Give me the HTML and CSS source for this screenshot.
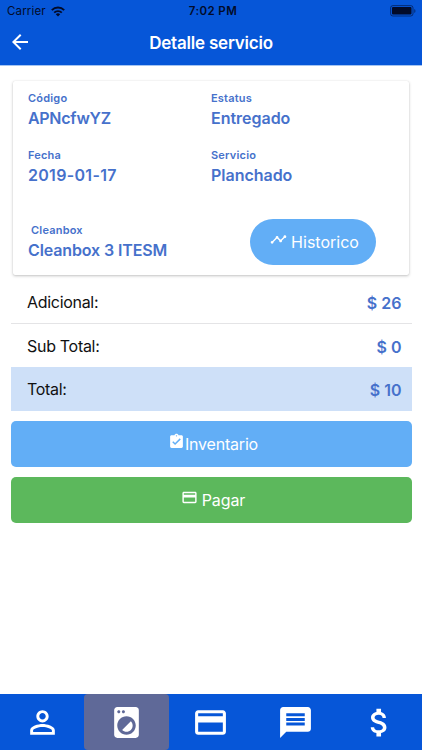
FILE: index.html
```html
<!DOCTYPE html>
<html lang="es">
<head>
<meta charset="utf-8">
<title>Detalle servicio</title>
<link rel="stylesheet" href="styles.css">
</head>
<body>
<div class="screen">
  <header class="header">
    <div class="status">
      <div class="carrier"><span>Carrier</span>
        <svg class="wifi" viewBox="0 0 14 11"><g fill="none" stroke="currentColor" stroke-width="1.9"><path d="M.8 4.1a8.8 8.8 0 0 1 12.4 0"/><path d="M3.2 6.7a5.4 5.4 0 0 1 7.6 0"/></g><path d="M4.8 8.3a3.1 3.1 0 0 1 4.4 0L7 10.6z" fill="currentColor"/></svg>
      </div>
      <div class="time">7:02 PM</div>
      <svg class="battery" viewBox="0 0 26 12"><rect x=".6" y=".6" width="22.4" height="10.4" rx="2.3" fill="none" stroke="currentColor" stroke-opacity=".55"/><rect x="2" y="2" width="19.5" height="7.6" rx="1" fill="currentColor"/><path d="M24.2 4v4q1.3-.6 1.3-2t-1.3-2z" fill="currentColor" fill-opacity=".5"/></svg>
    </div>
    <div class="titlebar">
      <svg class="back" viewBox="0 0 24 24"><path d="M20 11H7.83l5.59-5.59L12 4l-8 8 8 8 1.41-1.41L7.83 13H20v-2z"/></svg>
      <h1 class="title">Detalle servicio</h1>
    </div>
  </header>

  <main class="content">
    <section class="card">
      <div class="field"><span class="label">Código</span><span class="value code">APNcfwYZ</span></div>
      <div class="field"><span class="label">Estatus</span><span class="value">Entregado</span></div>
      <div class="field"><span class="label">Fecha</span><span class="value date">2019-01-17</span></div>
      <div class="field"><span class="label">Servicio</span><span class="value">Planchado</span></div>
      <div class="field box"><span class="label">Cleanbox</span><span class="value">Cleanbox 3 ITESM</span></div>
      <div class="history">
        <svg class="icon-timeline" viewBox="0 0 24 24"><path d="M23 8c0 1.1-.9 2-2 2-.18 0-.35-.02-.51-.07l-3.56 3.55c.05.16.07.34.07.52 0 1.1-.9 2-2 2s-2-.9-2-2c0-.18.02-.36.07-.52l-2.55-2.55c-.16.05-.34.07-.52.07s-.36-.02-.52-.07l-4.55 4.56c.05.16.07.33.07.51 0 1.1-.9 2-2 2s-2-.9-2-2 .9-2 2-2c.18 0 .35.02.51.07l4.56-4.55C8.02 9.36 8 9.18 8 9c0-1.1.9-2 2-2s2 .9 2 2c0 .18-.02.36-.07.52l2.55 2.55c.16-.05.34-.07.52-.07s.36.02.52.07l3.55-3.56C19.02 8.35 19 8.18 19 8c0-1.1.9-2 2-2s2 .9 2 2z"/></svg>
        <span>Historico</span>
      </div>
    </section>

    <section class="totals">
      <div class="row"><span>Adicional:</span><span class="amount">$ 26</span></div>
      <div class="row"><span>Sub Total:</span><span class="amount">$ 0</span></div>
      <div class="row total"><span>Total:</span><span class="amount">$ 10</span></div>
    </section>

    <div class="button inventory">
      <svg class="icon-button" viewBox="0 0 24 24"><path d="M19 3h-4.18C14.4 1.84 13.3 1 12 1c-1.3 0-2.4.84-2.82 2H5c-1.1 0-2 .9-2 2v14c0 1.1.9 2 2 2h14c1.1 0 2-.9 2-2V5c0-1.1-.9-2-2-2zm-7 0c.55 0 1 .45 1 1s-.45 1-1 1-1-.45-1-1 .45-1 1-1zm-2 14l-4-4 1.41-1.41L10 14.17l6.59-6.59L18 9l-8 8z"/></svg>
      <span>Inventario</span>
    </div>
    <div class="button pay">
      <svg class="icon-button" viewBox="0 0 24 24"><path d="M20 4H4c-1.11 0-1.99.89-1.99 2L2 18c0 1.11.89 2 2 2h16c1.11 0 2-.89 2-2V6c0-1.11-.89-2-2-2zm0 14H4v-6h16v6zm0-10H4V6h16v2z"/></svg>
      <span>Pagar</span>
    </div>
  </main>

  <nav class="tabs">
    <div class="tab"><svg viewBox="0 0 24 24"><path d="M12 5.9c1.16 0 2.1.94 2.1 2.1s-.94 2.1-2.1 2.1S9.9 9.16 9.9 8s.94-2.1 2.1-2.1m0 9c2.97 0 6.1 1.46 6.1 2.1v1.1H5.9V17c0-.64 3.13-2.1 6.1-2.1M12 4C9.79 4 8 5.79 8 8s1.79 4 4 4 4-1.79 4-4-1.79-4-4-4zm0 9c-2.67 0-8 1.34-8 4v3h16v-3c0-2.66-5.33-4-8-4z"/></svg></div>
    <div class="tab active"><svg viewBox="0 0 24 24"><path d="M9.17 16.83c1.56 1.56 4.1 1.56 5.66 0 1.56-1.56 1.56-4.1 0-5.66l-5.66 5.66zM18 2.01L6 2c-1.11 0-2 .89-2 2v16c0 1.11.89 2 2 2h12c1.11 0 2-.89 2-2V4c0-1.11-.89-1.99-2-1.99zM10 4c.55 0 1 .45 1 1s-.45 1-1 1-1-.45-1-1 .45-1 1-1zM7 4c.55 0 1 .45 1 1s-.45 1-1 1-1-.45-1-1 .45-1 1-1zm5 16c-3.31 0-6-2.69-6-6s2.69-6 6-6 6 2.69 6 6-2.69 6-6 6z"/></svg></div>
    <div class="tab"><svg viewBox="0 0 24 24"><path d="M20 4H4c-1.11 0-1.99.89-1.99 2L2 18c0 1.11.89 2 2 2h16c1.11 0 2-.89 2-2V6c0-1.11-.89-2-2-2zm0 14H4v-6h16v6zm0-10H4V6h16v2z"/></svg></div>
    <div class="tab"><svg viewBox="0 0 24 24"><path d="M20 2H4c-1.1 0-1.99.9-1.99 2L2 22l4-4h14c1.1 0 2-.9 2-2V4c0-1.1-.9-2-2-2zm-2 12H6v-2h12v2zm0-3H6V9h12v2zm0-3H6V6h12v2z"/></svg></div>
    <div class="tab"><svg viewBox="0 0 24 24"><path d="M11.8 10.9c-2.27-.59-3-1.2-3-2.15 0-1.09 1.01-1.85 2.7-1.85 1.78 0 2.44.85 2.5 2.1h2.21c-.07-1.72-1.12-3.3-3.21-3.81V3h-3v2.16c-1.94.42-3.5 1.68-3.5 3.61 0 2.31 1.91 3.46 4.7 4.13 2.5.6 3 1.48 3 2.41 0 .69-.49 1.79-2.7 1.79-2.06 0-2.87-.92-2.98-2.1h-2.2c.12 2.19 1.76 3.42 3.68 3.83V21h3v-2.15c1.95-.37 3.5-1.5 3.5-3.55 0-2.84-2.43-3.81-4.7-4.4z"/></svg></div>
  </nav>
</div>
</body>
</html>
```
FILE: styles.css
```css
* { box-sizing: border-box; }
body {
  margin: 0;
  font-family: Inter, "Liberation Sans", sans-serif;
  color: #111;
  background: #fff;
}
svg { display: block; fill: currentColor; flex: none; }
.screen { display: flex; flex-direction: column; height: 750px; overflow: hidden; }

.header { height: 66px; background: #0656d8; border-bottom: 1px solid #a4c4f2; }
.status {
  display: grid;
  grid-template-columns: 1fr auto 1fr;
  align-items: center;
  height: 22px;
  padding: 0 6px 0 7px;
  color: #020b29;
}
.carrier { display: flex; align-items: center; gap: 5px; font-size: 11.5px; letter-spacing: .15px; }
.wifi { width: 14px; height: 11px; }
.time { padding-left: 3px; font-size: 11.5px; font-weight: 600; letter-spacing: .4px; }
.battery { width: 26px; height: 12px; justify-self: end; }
.titlebar {
  display: grid;
  grid-template-columns: 24px 1fr 24px;
  align-items: center;
  height: 40px;
  padding: 0 8px;
  color: #fff;
}
.back { width: 24px; height: 24px; }
.title { margin: 0; padding-top: 1px; text-align: center; font-size: 17px; line-height: 22px; font-weight: 600; letter-spacing: -.2px; }

.content { flex: 1; padding: 15px 10.5px 0; }
.card {
  display: grid;
  grid-template-columns: 183px 1fr;
  grid-template-rows: 57px 75px 52px;
  height: 194px;
  margin: 0 2.5px;
  padding: 8px 0 0 15px;
  color: #4671cb;
  border-radius: 2px;
  box-shadow: 0 1px 3px rgba(0, 0, 0, .24), 0 0 1px rgba(0, 0, 0, .12);
}
.field { display: flex; flex-direction: column; }
.label { font-size: 11px; line-height: 18px; font-weight: 600; letter-spacing: .2px; }
.value { font-size: 16px; line-height: 22px; font-weight: 600; letter-spacing: -.02px; white-space: nowrap; }
.code { letter-spacing: -.3px; }
.date { letter-spacing: .3px; }
.box .label { padding-left: 3px; }
.box .value { letter-spacing: -.12px; }
.history {
  display: flex;
  align-items: center;
  justify-content: center;
  gap: 4px;
  width: 126px;
  height: 46px;
  margin: -2px 0 0 39px;
  padding-left: 3px;
  border-radius: 23px;
  background: #62aef6;
  color: #fff;
  font-size: 16px;
}
.icon-timeline { width: 17px; height: 17px; margin-top: -5px; }

.totals { margin-top: 6px; }
.row {
  display: flex;
  justify-content: space-between;
  align-items: center;
  height: 43px;
  padding: 0 10px 0 16.5px;
  border-bottom: 1px solid #e4e4e6;
  font-size: 16px;
  letter-spacing: -.3px;
}
.row + .row { border-bottom: 0; }
.amount { padding-top: 2px; color: #4671cb; font-weight: 600; letter-spacing: 0; }
.total { height: 44px; background: #cee0f8; }

.button {
  display: flex;
  align-items: center;
  justify-content: center;
  height: 46px;
  margin-top: 10px;
  padding-left: 4px;
  border-radius: 5px;
  color: #fff;
  font-size: 16px;
  letter-spacing: -.2px;
}
.inventory { background: #62aef6; }
.pay { background: #5cb85c; gap: 4px; letter-spacing: -.1px; }
.icon-button { width: 17px; height: 17px; margin-top: -5px; }

.tabs { display: grid; grid-template-columns: repeat(5, 1fr); height: 56px; background: #0656d8; color: #fff; }
.tab { display: flex; align-items: center; justify-content: center; border-radius: 4px; }
.tab svg { width: 37px; height: 37px; }
.active { background: #5f6998; }
```
